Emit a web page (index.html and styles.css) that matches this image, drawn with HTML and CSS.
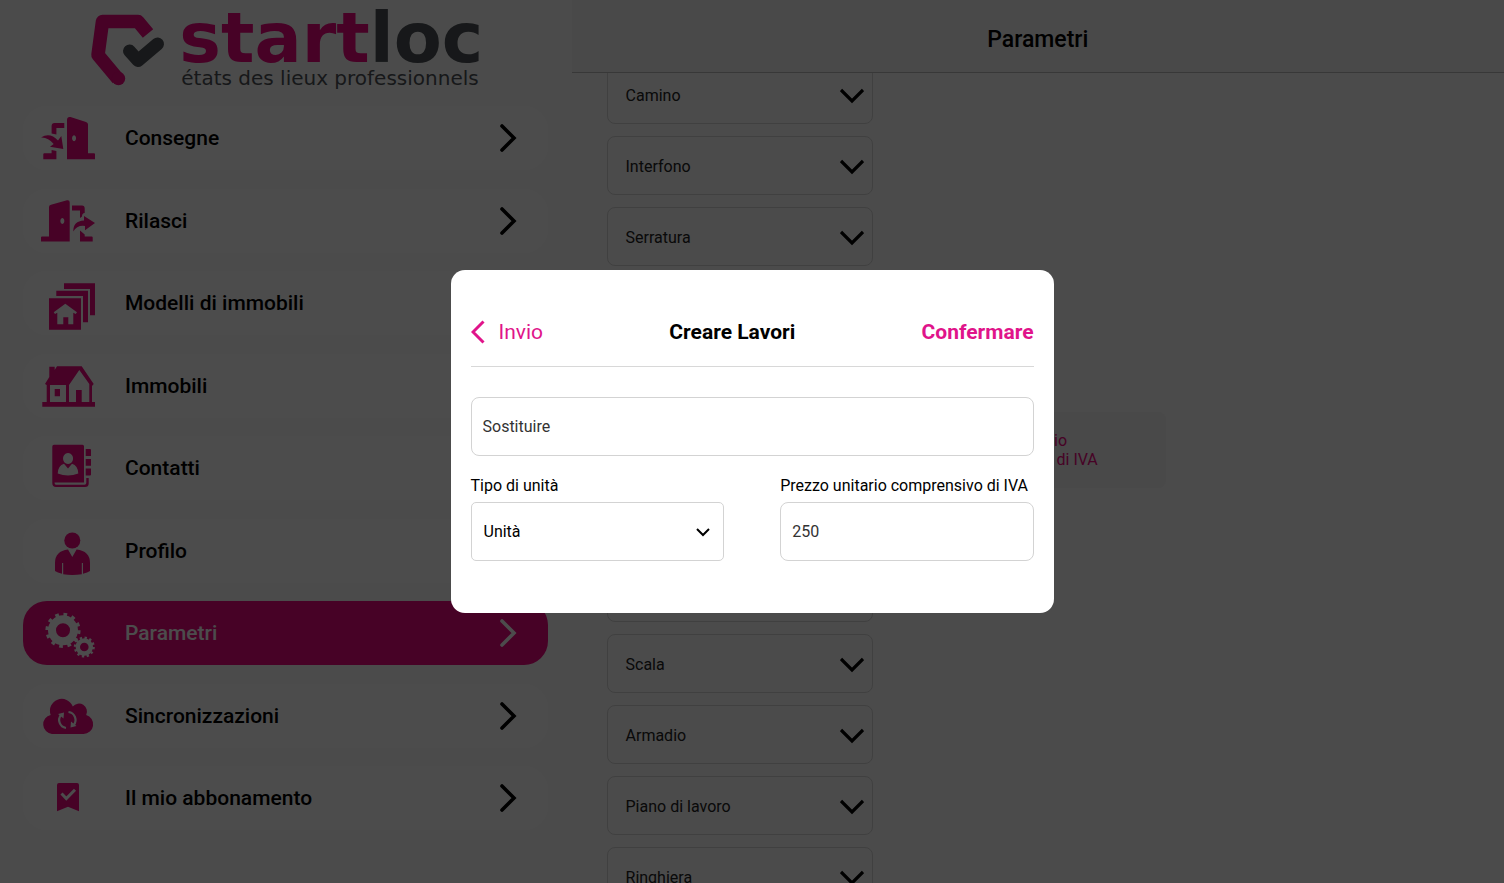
FILE: index.html
```
<!DOCTYPE html>
<html lang="it">
<head>
  <meta charset="UTF-8">
  <meta name="viewport" content="width=device-width, initial-scale=1">
  <title>Startloc - Parametri</title>
  <link rel="stylesheet" href="styles.css">
</head>
<body>

  <div class="app">
    <aside class="sidebar">
      <div class="logo">
        <svg class="logo-mark" viewBox="0 0 80 80" aria-hidden="true">
          <path d="M31 69 L11 45 L15.500 11.500 H51 L61 23.500" fill="none" stroke="#ed077f" stroke-width="13.500" stroke-linejoin="round"/>
          <circle cx="31.500" cy="68.500" r="6.700" fill="#ed077f"/>
          <path d="M42.500 41 L51 50.500 L70.500 34" fill="none" stroke="#4e5357" stroke-width="13" stroke-linejoin="round" stroke-linecap="round"/>
        </svg>
        <div class="logo-text">
          <span class="logo-name">start<span>loc</span></span>
          <span class="logo-tagline">états des lieux professionnels</span>
        </div>
      </div>

      <nav class="menu">
        <a href="#" class="menu-item">
          <svg class="menu-icon" viewBox="0 -2 60 54" aria-hidden="true">
            <path fill-rule="evenodd" d="M27 7 Q27 3.500 30.500 4 L46 9 Q48 9.700 48 11.500 V40.300 H54 Q55 40.300 55 41.300 V46.300 H27Z M34 22.300 a2 3 0 1 0 .1 0Z"/>
            <path d="M11.600 20.500 V13 Q11.600 10 14.600 10 H24.300 V15 H16.400 V21.500Z"/>
            <path d="M1 24.500 Q10 19 18 27.500 L21.300 23 L23.300 36 L10 33.700 L13.700 31 Q8 24 1 24.500Z"/>
            <path d="M11.600 37 L16.400 38 V46.300 H3.300 V41.300 Q3.300 40.300 4.300 40.300 H11.600Z"/>
          </svg>
          <span class="menu-label">Consegne</span>
          <svg class="chevron" viewBox="0 0 18 30" aria-hidden="true"><path d="M3 3 L15 15 L3 27"/></svg>
        </a>
        <a href="#" class="menu-item">
          <svg class="menu-icon" viewBox="0 -2 60 54" aria-hidden="true">
            <path fill-rule="evenodd" d="M29.700 6.500 Q29.700 3.800 27 4.300 L11 8.700 Q9 9.300 9 11 V40.600 H2 Q1 40.600 1 41.600 V45.600 H29.700Z M22.300 22 a2 3 0 1 0 .1 0Z"/>
            <path d="M32 9.600 H42 Q44.700 9.600 44.700 12.500 V17 Q42 17 42 20.500 L40 22 V14.600 H32Z"/>
            <path d="M33.300 35.500 Q33 25 44 24.500 V20 L55 27 L45 34.300 V30 Q37 29 33.300 35.500Z"/>
            <path d="M40 34.600 L44.700 38.600 V40.600 H51.700 Q52.700 40.600 52.700 41.600 V45.600 H40Z"/>
          </svg>
          <span class="menu-label">Rilasci</span>
          <svg class="chevron" viewBox="0 0 18 30" aria-hidden="true"><path d="M3 3 L15 15 L3 27"/></svg>
        </a>
        <a href="#" class="menu-item">
          <svg class="menu-icon" viewBox="0 -2 60 54" aria-hidden="true">
            <path d="M24 5.300 H55 V37.300 H50 V11 H24Z"/>
            <path d="M16.300 12.700 H48 V44.300 H43 V18 H16.300Z"/>
            <path fill-rule="evenodd" d="M9 20.300 H41 V51.700 H9Z M25.300 25.700 L13.700 34.300 L15 36 L17.300 34.700 V46.300 H23.300 V39.300 H28.300 V46.300 H33.300 V34.700 L35.700 36 L37 34.300Z"/>
          </svg>
          <span class="menu-label">Modelli di immobili</span>
          <svg class="chevron" viewBox="0 0 18 30" aria-hidden="true"><path d="M3 3 L15 15 L3 27"/></svg>
        </a>
        <a href="#" class="menu-item">
          <svg class="menu-icon" viewBox="0 -2 60 54" aria-hidden="true">
            <path fill-rule="evenodd" d="M5 23 L9.300 16 V5.700 H14.700 V9 L17 5.300 H41.700 L53.700 23 L52 25 V41 H55 V45.700 H2.300 V41 H6.700 V24Z M10 24 H26 V41 H10Z M39.300 9 L29 24 V41 H49.300 V23Z"/>
            <path d="M14.700 28 H20 V35.300 H14.700Z M36 29 H41.700 V42 H36Z"/>
          </svg>
          <span class="menu-label">Immobili</span>
          <svg class="chevron" viewBox="0 0 18 30" aria-hidden="true"><path d="M3 3 L15 15 L3 27"/></svg>
        </a>
        <a href="#" class="menu-item">
          <svg class="menu-icon" viewBox="0 -2 60 54" aria-hidden="true">
            <path fill-rule="evenodd" d="M14 1.700 H42.500 Q44 1.700 44 3.200 V39.500 H14.500 Q14.500 41.700 16 41.700 H44.500 Q46.300 41.700 46.300 40 V35 H48.700 V40.500 Q48.700 44 45 44 H16 Q12.300 44 12.300 40 V3.500 Q12.300 1.700 14 1.700Z M28 10 a5 5.500 0 1 0 .1 0Z M24 20.700 Q18 22.500 17.700 30.500 Q28 34.500 38.300 30.500 Q38 22.500 32 20.700 L28 25.500Z"/>
            <path d="M45.700 6 H50 Q51 6 51 7 V13 H45.700Z M45.700 16 H51 V22.700 H45.700Z M45.700 25.500 H51 V31.500 Q51 32.500 50 32.500 H45.700Z"/>
          </svg>
          <span class="menu-label">Contatti</span>
          <svg class="chevron" viewBox="0 0 18 30" aria-hidden="true"><path d="M3 3 L15 15 L3 27"/></svg>
        </a>
        <a href="#" class="menu-item">
          <svg class="menu-icon" viewBox="0 -2 60 54" aria-hidden="true">
            <circle cx="32.300" cy="14.500" r="8"/>
            <path d="M28 23.500 L32.300 31 L36.600 23.500 Q50 25 50 37 V45 Q47.500 46.700 43 47.800 V37 H41.800 V48.200 Q32 49.800 23.200 48.200 V37 H22 V47.800 Q17.500 46.700 15 45 V37 Q15 25 28 23.500Z"/>
          </svg>
          <span class="menu-label">Profilo</span>
          <svg class="chevron" viewBox="0 0 18 30" aria-hidden="true"><path d="M3 3 L15 15 L3 27"/></svg>
        </a>
        <a href="#" class="menu-item active">
          <svg class="menu-icon gears" viewBox="0 -2 60 54" aria-hidden="true">
            <circle cx="23" cy="22.300" r="11" stroke-width="8"/>
            <circle cx="23" cy="22.300" r="15.600" stroke-width="4" stroke-dasharray="3.600 4.568"/>
            <circle cx="44.300" cy="39" r="6.500" stroke-width="4.400"/>
            <circle cx="44.300" cy="39" r="9.200" stroke-width="2.600" stroke-dasharray="2.300 2.517"/>
          </svg>
          <span class="menu-label">Parametri</span>
          <svg class="chevron" viewBox="0 0 18 30" aria-hidden="true"><path d="M3 3 L15 15 L3 27"/></svg>
        </a>
        <a href="#" class="menu-item">
          <svg class="menu-icon" viewBox="0 -2 60 54" aria-hidden="true">
            <path d="M12 43 A9.700 9.700 0 0 1 10.700 23.900 A11.800 11.800 0 0 1 32.800 15.500 A8 8 0 0 1 46.200 24 A9.700 9.700 0 0 1 43.500 43Z"/>
            <g class="sync">
              <path d="M26 37 A8 8 0 0 1 21 24 M28.500 21 A8 8 0 0 1 33.700 34"/>
              <path class="sync-head" d="M18 23 L24 21.500 L23.500 27.500Z M36.500 35 L30.500 36.500 L31 30.500Z"/>
            </g>
          </svg>
          <span class="menu-label">Sincronizzazioni</span>
          <svg class="chevron" viewBox="0 0 18 30" aria-hidden="true"><path d="M3 3 L15 15 L3 27"/></svg>
        </a>
        <a href="#" class="menu-item">
          <svg class="menu-icon" viewBox="0 -2 60 54" aria-hidden="true">
            <path d="M19 10 H37 Q39 10 39 12 V38.300 L28 33.700 L17 38.300 V12 Q17 10 19 10Z"/>
            <path class="tick" d="M21.500 20.500 L26.300 25.500 L35 16.800"/>
          </svg>
          <span class="menu-label">Il mio abbonamento</span>
          <svg class="chevron" viewBox="0 0 18 30" aria-hidden="true"><path d="M3 3 L15 15 L3 27"/></svg>
        </a>
      </nav>
    </aside>

    <main class="content">
      <header class="topbar">
        <h1>Parametri</h1>
      </header>
      <div class="list-wrap">
        <ul class="list">
          <li><button class="row">Camino <svg class="arrow" viewBox="0 0 24 16" aria-hidden="true"><path d="M1 2 L12 13 L23 2"/></svg></button></li>
          <li><button class="row">Interfono <svg class="arrow" viewBox="0 0 24 16" aria-hidden="true"><path d="M1 2 L12 13 L23 2"/></svg></button></li>
          <li><button class="row">Serratura <svg class="arrow" viewBox="0 0 24 16" aria-hidden="true"><path d="M1 2 L12 13 L23 2"/></svg></button></li>
          <li><button class="row" aria-label="Voce"></button></li>
          <li><button class="row" aria-label="Voce"></button></li>
          <li class="open">
            <button class="row" aria-label="Voce"></button>
            <div class="price-card">Prezzo unitario<br>comprensivo di IVA</div>
          </li>
          <li><button class="row" aria-label="Voce"></button></li>
          <li><button class="row" aria-label="Voce"></button></li>
          <li><button class="row">Scala <svg class="arrow" viewBox="0 0 24 16" aria-hidden="true"><path d="M1 2 L12 13 L23 2"/></svg></button></li>
          <li><button class="row">Armadio <svg class="arrow" viewBox="0 0 24 16" aria-hidden="true"><path d="M1 2 L12 13 L23 2"/></svg></button></li>
          <li><button class="row">Piano di lavoro <svg class="arrow" viewBox="0 0 24 16" aria-hidden="true"><path d="M1 2 L12 13 L23 2"/></svg></button></li>
          <li><button class="row">Ringhiera <svg class="arrow" viewBox="0 0 24 16" aria-hidden="true"><path d="M1 2 L12 13 L23 2"/></svg></button></li>
        </ul>
      </div>
    </main>
  </div>

  <div class="overlay">
    <form class="modal" role="dialog" aria-labelledby="modal-title">
      <div class="modal-header">
        <button type="button" class="btn-back">
          <svg viewBox="0 0 14 24" aria-hidden="true"><path d="M12.500 1.500 L2 12 L12.500 22.500"/></svg>
          Invio
        </button>
        <h2 id="modal-title">Creare Lavori</h2>
        <button type="submit" class="btn-confirm">Confermare</button>
      </div>

      <input type="text" class="field" value="Sostituire" aria-label="Nome">

      <div class="form-row">
        <div class="form-group">
          <label for="unit">Tipo di unità</label>
          <div class="select-wrap">
            <select id="unit" class="field">
              <option>Unità</option>
            </select>
            <svg viewBox="0 0 14 10" aria-hidden="true"><path d="M1 2 L7 8 L13 2"/></svg>
          </div>
        </div>
        <div class="form-group">
          <label for="price">Prezzo unitario comprensivo di IVA</label>
          <input type="text" id="price" class="field" value="250">
        </div>
      </div>
    </form>
  </div>

</body>
</html>
```
FILE: styles.css
```
* {
  box-sizing: border-box;
}

body {
  margin: 0;
  font-family: Roboto, "Liberation Sans", sans-serif;
  font-size: 16px;
  color: #000;
  background-color: #fafafa;
}

button,
input,
select {
  font-family: inherit;
}

.app {
  display: flex;
  height: 100vh;
  overflow: hidden;
}

/* SIDEBAR */
.sidebar {
  display: flex;
  flex-direction: column;
  width: 38%;
  padding: 0 24px 53px 23px;
  background-color: #fcfcfc;
}

.logo {
  display: flex;
  align-items: flex-start;
  justify-content: center;
  gap: 12px;
  height: 106px;
  padding-top: 10px;
}

.logo-mark {
  width: 80px;
  height: 80px;
}

.logo-text {
  display: flex;
  flex-direction: column;
  font-family: "DejaVu Sans", sans-serif;
  white-space: nowrap;
}

.logo-name {
  font-size: 70px;
  font-weight: 700;
  line-height: 56px;
  color: #ed077f;
}

.logo-name span {
  color: #4e5357;
}

.logo-tagline {
  padding-left: 2px;
  font-size: 20px;
  line-height: 24px;
  color: #4e5357;
}

.menu {
  display: flex;
  flex: 1;
  flex-direction: column;
  justify-content: space-between;
}

.menu-item {
  display: flex;
  align-items: center;
  height: 64px;
  padding: 0 31px 0 17px;
  border-radius: 24px;
  background-color: #fff;
  color: #000;
  font-size: 21px;
  font-weight: 500;
  text-decoration: none;
}

.menu-icon {
  width: 60px;
  height: 54px;
  margin-right: 25px;
  fill: #ed077f;
}

.menu-label {
  flex: 1;
}

.chevron {
  width: 18px;
  height: 30px;
  fill: none;
  stroke: #000;
  stroke-width: 3.6;
  stroke-linecap: round;
}

.menu-item.active {
  background-color: #ed077f;
  color: #fff;
}

.menu-item.active .chevron,
.gears {
  stroke: #fff;
}

.gears,
.sync {
  fill: none;
}

.sync {
  stroke: #fff;
  stroke-width: 2.2;
}

.sync-head {
  fill: #fff;
  stroke: none;
}

.tick {
  fill: none;
  stroke: #fff;
  stroke-width: 3;
}

/* CONTENT */
.content {
  display: flex;
  flex: 1;
  flex-direction: column;
}

.topbar {
  flex: none;
  padding: 26px 0 18px;
  border-bottom: 1px solid #bbb;
  background-color: #f6f6f6;
  text-align: center;
}

h1 {
  margin: 0;
  font-size: 23px;
  font-weight: 500;
  line-height: 28px;
}

.list-wrap {
  flex: 1;
  overflow: hidden;
  padding-left: 35px;
}

.list {
  display: flex;
  flex-direction: column;
  gap: 12px;
  margin: -8px 0 0;
  padding: 0;
  list-style: none;
}

.list li {
  display: flex;
  align-items: center;
  gap: 24px;
  height: 59px;
}

.list .open {
  height: 60px;
}

.row {
  display: flex;
  align-items: center;
  justify-content: space-between;
  width: 266px;
  height: 59px;
  padding: 2px 8px 0 18px;
  border: 1px solid #d8d8d8;
  border-radius: 8px;
  background-color: transparent;
  color: #222;
  font-size: 16px;
}

.arrow {
  width: 24px;
  height: 16px;
  fill: none;
  stroke: #000;
  stroke-width: 3.2;
}

.price-card {
  width: 269px;
  padding: 19px 64px;
  border-radius: 8px;
  background-color: #f3f3f3;
  color: #ed077f;
  font-size: 16px;
  line-height: 19px;
  white-space: nowrap;
}

/* MODAL */
.overlay {
  position: fixed;
  inset: 0;
  display: flex;
  align-items: center;
  justify-content: center;
  background-color: rgba(0, 0, 0, 0.7);
}

.modal {
  width: 603px;
  max-width: 90%;
  padding: 44px 20px 52px;
  border-radius: 14px;
  background-color: #fff;
}

.modal-header {
  display: flex;
  align-items: center;
  justify-content: space-between;
  margin-bottom: 30px;
  padding: 4px 0 20px;
  border-bottom: 1px solid #d8d8d8;
}

h2 {
  margin: 0;
  font-size: 21px;
  font-weight: 700;
  line-height: 28px;
}

.btn-back,
.btn-confirm {
  display: flex;
  align-items: center;
  gap: 14px;
  padding: 0;
  border: none;
  background: none;
  color: #e0148a;
  font-size: 21px;
  line-height: 28px;
  cursor: pointer;
}

.btn-confirm {
  font-weight: 700;
}

.btn-back svg {
  width: 14px;
  height: 24px;
  fill: none;
  stroke: #e0148a;
  stroke-width: 3;
}

.field {
  display: block;
  width: 100%;
  height: 59px;
  padding: 0 11px;
  border: 1px solid #d3d3d3;
  border-radius: 8px;
  background-color: #fff;
  color: #333;
  font-size: 16px;
}

.form-row {
  display: flex;
  justify-content: space-between;
  margin-top: 20px;
}

.form-group {
  width: 45%;
}

.form-group label {
  display: block;
  margin-bottom: 6px;
  line-height: 20px;
  white-space: nowrap;
}

.select-wrap {
  position: relative;
}

.select-wrap .field {
  appearance: none;
  padding-left: 12px;
  border-radius: 5px;
  color: #000;
}

.select-wrap svg {
  position: absolute;
  top: 25px;
  right: 14px;
  width: 14px;
  height: 10px;
  fill: none;
  stroke: #000;
  stroke-width: 2;
  pointer-events: none;
}
```
